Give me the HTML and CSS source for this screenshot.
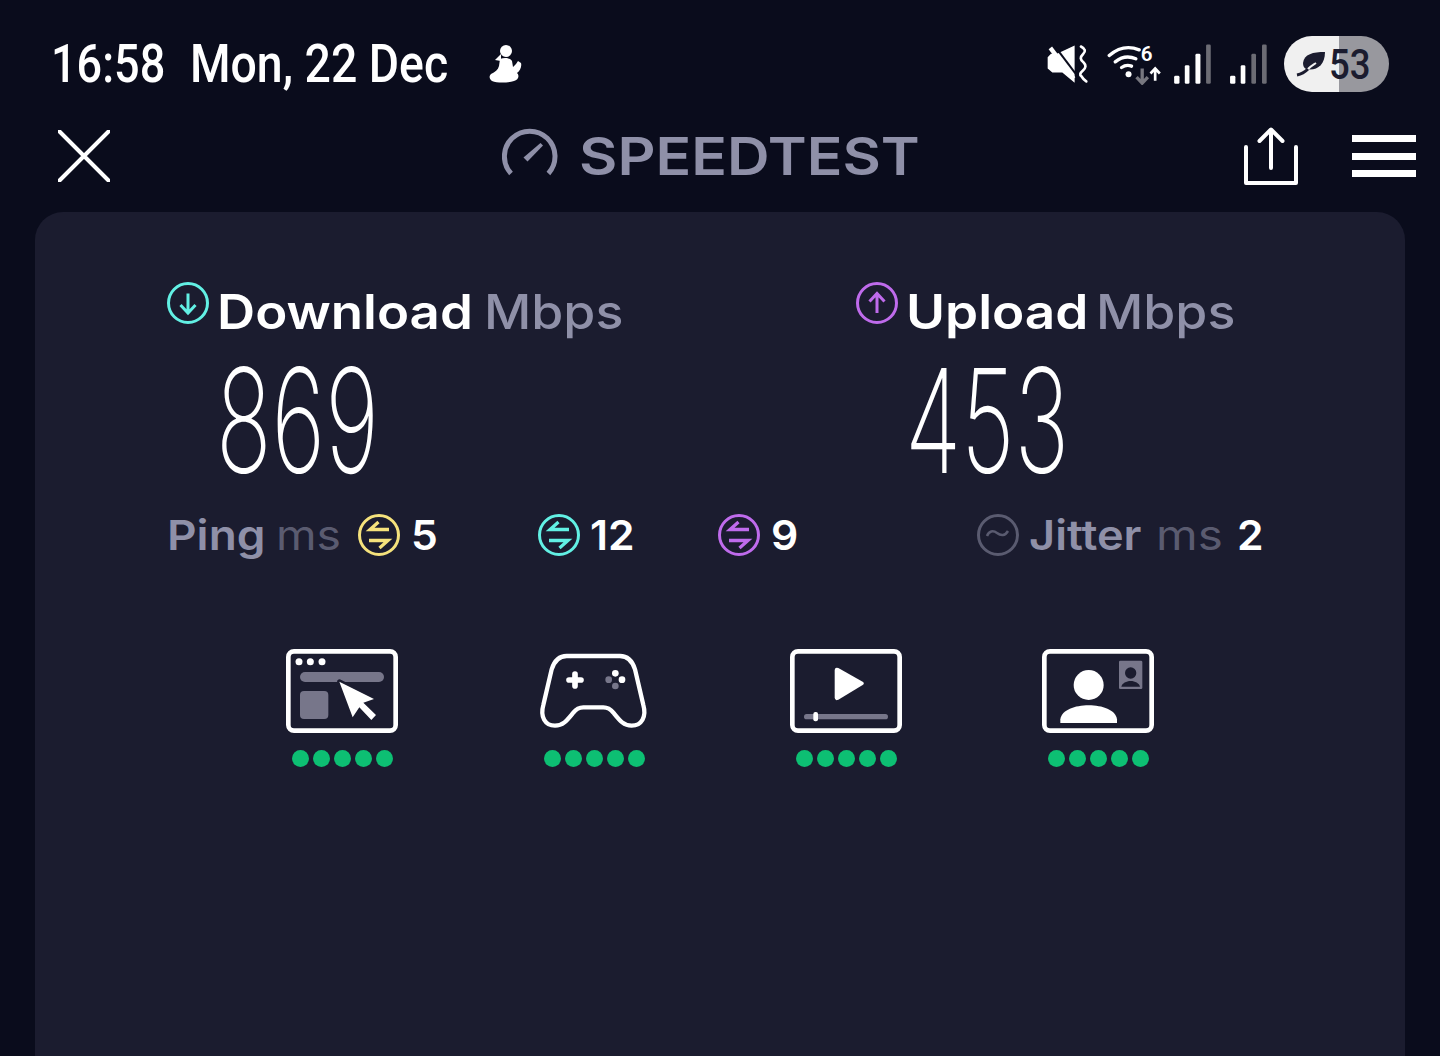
FILE: index.html
```html
<!DOCTYPE html>
<html lang="en">
<head>
<meta charset="utf-8">
<title>Speedtest</title>
<link rel="stylesheet" href="styles.css">
</head>
<body>
<div class="screen">
  <div class="status">
    <span class="time">16:58</span>
    <span class="date">Mon, 22 Dec</span>
    <svg class="figure" viewBox="0 0 36 40"><circle cx="19" cy="6" r="6" fill="#fff"/><path d="M14 9 8 15l6 1Z" fill="#fff"/><path d="M13 14c5-2 10-1 12 2l1 6 3-3 2-3 3 2c1 4-1 8-4 10 3 3 1 7-3 8-7 2-17 2-22 0-3-2-3-5-1-7 4-2 7-4 8-8Z" fill="#fff"/></svg>
    <svg class="sys" viewBox="50 70 670 125">
      <path d="M52 112 62 102H80L133 77V189L96 158H66L52 146Z" fill="#fff"/>
      <path d="M60 84 130 176" stroke="#fff" stroke-width="13" fill="none"/>
      <path d="M71 76 141 168" stroke="#0a0c1c" stroke-width="6" fill="none"/>
      <path d="M152 80Q172 90 158 103T160 128Q172 140 158 152T154 170Q160 180 168 185" stroke="#fff" stroke-width="8" stroke-linecap="round" fill="none"/>
      <g fill="none" stroke="#fff" stroke-width="10" stroke-linecap="round"><path d="M237 107c30-26 60-29 90-17"/><path d="M255 126c20-16 42-18 62-9"/><path d="M274 143c10-7 20-8 30-4"/></g>
      <circle cx="295" cy="163" r="9" fill="#fff"/>
      <text class="wifi6" x="332" y="124">6</text>
      <path d="M336 146v42m-17-16 17 18 17-18" stroke="#77777f" stroke-width="10" fill="none"/>
      <path d="M375 183v-36m-14 14 14-15 14 15" stroke="#fff" stroke-width="8" fill="none"/>
      <g fill="#fff"><rect x="432" y="168" width="16" height="24" rx="4"/><rect x="464" y="136" width="14" height="56" rx="4"/><rect x="496" y="102" width="15" height="90" rx="4"/><rect x="600" y="168" width="16" height="24" rx="4"/><rect x="632" y="136" width="14" height="56" rx="4"/></g>
      <g fill="#6c6c74"><rect x="528" y="74" width="14" height="118" rx="4"/><rect x="664" y="102" width="14" height="90" rx="4"/><rect x="696" y="74" width="14" height="118" rx="4"/></g>
    </svg>
    <div class="battery">
      <svg class="leaf" viewBox="0 0 30 26"><path d="M29 1C17 1 8 3 7 12c0 3 1 5 3 6 10 2 19-3 19-17Z" fill="#1b1c2f"/><path d="M1 24c5-1 8-3 11-6 3-3 5-4 8-6" fill="none" stroke="#f0f0f0" stroke-width="2"/><path d="M1 24c5-1 8-3 11-6" fill="none" stroke="#1b1c2f" stroke-width="3"/></svg>
      <span class="level">53</span>
    </div>
  </div>

  <header class="topbar">
    <svg class="close" viewBox="0 0 52 52"><path d="M1.500 1.500l49 49M50.500 1.500l-49 49" stroke="#fff" stroke-width="4" stroke-linecap="round"/></svg>
    <div class="brand">
      <svg class="gauge" viewBox="0 0 56 50"><path d="M9 45.500A25.300 25.300 0 1 1 46.400 45.500" fill="none" stroke="#8f90a8" stroke-width="5"/><path d="M21.500 29.500 38.500 15 41 17.500 25.500 33.500Z" fill="#8f90a8"/></svg>
      <span class="brand-name">SPEEDTEST</span>
    </div>
    <svg class="share" viewBox="0 0 54 58"><path d="M27 41V3M15.500 14 27 2.500 38.500 14M2 20v36h50V20" fill="none" stroke="#fff" stroke-width="4" stroke-linecap="round" stroke-linejoin="round"/></svg>
    <div class="menu"><i></i><i></i><i></i></div>
  </header>

  <main class="card">
    <section class="speeds">
      <div class="speed">
        <div class="speed-label">
          <svg class="dir" viewBox="0 0 42 42"><circle cx="21" cy="21" r="19.500" fill="none" stroke="#62f0e4" stroke-width="3"/><path d="M21 11.500v19M13.500 23l7.500 8 7.500-8" fill="none" stroke="#62f0e4" stroke-width="3"/></svg>
          <span class="label-main main-down">Download</span><span class="label-unit">Mbps</span>
        </div>
        <div class="big">869</div>
      </div>
      <div class="speed">
        <div class="speed-label">
          <svg class="dir" viewBox="0 0 42 42"><circle cx="21" cy="21" r="19.500" fill="none" stroke="#bf6bec" stroke-width="3"/><path d="M21 31V12M13.500 19.500 21 11.500l7.500 8" fill="none" stroke="#bf6bec" stroke-width="3"/></svg>
          <span class="label-main main-up">Upload</span><span class="label-unit">Mbps</span>
        </div>
        <div class="big">453</div>
      </div>
    </section>

    <section class="latency">
      <span class="lat-word ping-word">Ping</span>
      <span class="lat-unit ping-unit">ms</span>
      <svg class="lat-icon" viewBox="0 0 42 42"><circle cx="21" cy="21" r="19.500" fill="none" stroke="#f5e27c" stroke-width="3"/><path d="M31 15.500H12L20.500 8M11 26.500H30L21.500 34" fill="none" stroke="#f5e27c" stroke-width="3.300"/></svg>
      <span class="lat-val val-idle">5</span>
      <svg class="lat-icon" viewBox="0 0 42 42"><circle cx="21" cy="21" r="19.500" fill="none" stroke="#62f0e4" stroke-width="3"/><path d="M31 15.500H12L20.500 8M11 26.500H30L21.500 34" fill="none" stroke="#62f0e4" stroke-width="3.300"/></svg>
      <span class="lat-val val-down">12</span>
      <svg class="lat-icon" viewBox="0 0 42 42"><circle cx="21" cy="21" r="19.500" fill="none" stroke="#bf6bec" stroke-width="3"/><path d="M31 15.500H12L20.500 8M11 26.500H30L21.500 34" fill="none" stroke="#bf6bec" stroke-width="3.300"/></svg>
      <span class="lat-val val-up">9</span>
      <svg class="lat-icon" viewBox="0 0 42 42"><circle cx="21" cy="21" r="19.500" fill="none" stroke="#5a5b70" stroke-width="3"/><path d="M10 22c2-5 6-6 10-3s8 3 11-2" fill="none" stroke="#5a5b70" stroke-width="2.500"/></svg>
      <span class="lat-word jitter-word">Jitter</span>
      <span class="lat-unit jitter-unit">ms</span>
      <span class="lat-val val-jitter">2</span>
    </section>

    <section class="quality">
      <div class="q">
        <svg class="q-icon" viewBox="48 57 336 252">
          <rect x="55" y="64" width="322" height="238" rx="17" fill="none" stroke="#fff" stroke-width="14"/>
          <circle cx="87" cy="95" r="10.500" fill="#fff"/><circle cx="121" cy="95" r="10.500" fill="#fff"/><circle cx="156" cy="95" r="10.500" fill="#fff"/>
          <rect x="90" y="126" width="252" height="30" rx="15" fill="#77768a"/>
          <rect x="90" y="183" width="85" height="84" rx="12" fill="#77768a"/>
          <path class="cursor" d="M208 155 312 207 280 218 318 255 304 270 268 232 248 262Z"/>
        </svg>
        <div class="dots"><i></i><i></i><i></i><i></i><i></i></div>
      </div>
      <div class="q">
        <svg class="q-icon" viewBox="804 57 336 252">
          <path d="M890 78H1050C1075 78 1088 96 1095 118L1120 225C1130 260 1115 287 1085 287 1060 287 1048 270 1030 248 1020 235 1012 232 1000 232H940C928 232 920 235 910 248 892 270 880 287 855 287 825 287 810 260 820 225L845 118C852 96 865 78 890 78Z" fill="none" stroke="#fff" stroke-width="13"/>
          <path d="M915 132v36M897 150h36" stroke="#fff" stroke-width="17" stroke-linecap="round"/>
          <circle cx="1036" cy="130" r="10" fill="#fff"/><circle cx="1056" cy="149" r="10" fill="#fff"/><circle cx="1016" cy="149" r="10" fill="#77768a"/><circle cx="1036" cy="168" r="10" fill="#77768a"/>
        </svg>
        <div class="dots"><i></i><i></i><i></i><i></i><i></i></div>
      </div>
      <div class="q">
        <svg class="q-icon" viewBox="60 57 336 252">
          <rect x="67" y="64" width="322" height="238" rx="17" fill="none" stroke="#fff" stroke-width="14"/>
          <path d="M205 114 278 155Q285 160 278 165L205 209Q194 214 194 202V122Q194 110 205 114Z" fill="#fff"/>
          <rect x="102" y="252" width="252" height="16" rx="8" fill="#77768a"/>
          <rect x="130" y="246" width="14" height="28" rx="6" fill="#fff"/>
        </svg>
        <div class="dots"><i></i><i></i><i></i><i></i><i></i></div>
      </div>
      <div class="q">
        <svg class="q-icon" viewBox="816 57 336 252">
          <rect x="823" y="64" width="322" height="238" rx="17" fill="none" stroke="#fff" stroke-width="14"/>
          <circle cx="956" cy="165" r="45" fill="#fff"/>
          <path d="M871 279V268C875 240 915 226 956 226S1037 240 1041 268V279Z" fill="#fff"/>
          <rect x="1047" y="92" width="70" height="85" rx="4" fill="#77768a"/>
          <circle cx="1082" cy="129" r="17" fill="#1b1c2f"/>
          <path d="M1054 170c2-10 15-17 28-17s26 7 28 17Z" fill="#1b1c2f"/>
        </svg>
        <div class="dots"><i></i><i></i><i></i><i></i><i></i></div>
      </div>
    </section>
  </main>
</div>
</body>
</html>
```
FILE: styles.css
```css
* { box-sizing: border-box; }
html, body { margin: 0; padding: 0; height: 100%; }
body { background: #0a0c1c; overflow: hidden; font-family: Inter, "Liberation Sans", sans-serif; }
.screen { height: 1056px; display: flex; flex-direction: column; }

.status { height: 128px; padding: 36px 51px 0 51px; display: flex; align-items: flex-start; }
.time, .date { display: block; flex: none; font: 500 53px/56px Roboto, sans-serif; color: #fff; white-space: pre; transform-origin: left center; }
.time { width: 139px; transform: scaleX(.85); }
.date { width: 297px; transform: scaleX(.875); }
.figure { width: 36px; height: 40px; margin: 9px 0 0 0; flex: none; }
.sys { width: 223px; height: 42px; margin: 7px 0 0 auto; flex: none; }
.wifi6 { font: 600 62px Roboto, sans-serif; fill: #fff; }
.battery { width: 105px; height: 56px; margin-left: 14px; border-radius: 28px; background: linear-gradient(90deg, #f0f0f0 0 55px, #98989e 55px); display: flex; align-items: center; padding-left: 12px; flex: none; }
.leaf { width: 30px; height: 26px; flex: none; }
.level { font: 500 43px/56px Roboto, sans-serif; color: #1b1c2f; margin-left: 3px; transform: scaleX(.85); transform-origin: left center; }

.topbar { height: 84px; padding: 0 24px 28px 58px; display: flex; align-items: center; }
.close { width: 52px; height: 52px; flex: none; }
.brand { display: flex; align-items: center; margin-left: 392px; flex: none; }
.gauge { width: 56px; height: 50px; margin-bottom: 6px; flex: none; }
.brand-name { display: block; width: 336px; margin: 2px 0 0 21px; font: 600 52px/56px Inter, sans-serif; color: #8f90a8; transform: scaleX(1.135); transform-origin: left center; }
.share { width: 54px; height: 58px; margin-left: auto; flex: none; }
.menu { width: 64px; margin-left: 54px; display: flex; flex-direction: column; gap: 10.500px; flex: none; }
.menu i { display: block; height: 7px; background: #fff; }

.card { flex: 1; margin: 0 35px; background: #1b1c2f; border-radius: 28px 28px 0 0; padding: 70px 0 0 132px; }
.speeds { display: grid; grid-template-columns: 689px 1fr; }
.speed-label { display: flex; align-items: flex-start; height: 60px; }
.dir { width: 42px; height: 42px; flex: none; }
.label-main { display: block; margin-left: 8px; font: 600 48px/60px Inter, sans-serif; color: #fff; transform-origin: left center; }
.main-down { width: 267px; transform: scaleX(1.1); }
.main-up { width: 190px; transform: scaleX(1.105); }
.label-unit { display: block; font: 500 48px/60px Inter, sans-serif; color: #8f90a8; transform: scaleX(1.08); transform-origin: left center; }
.big { margin: 14px 0 0 49px; height: 130px; font: 250 145px/130px Inter, sans-serif; color: #fff; transform: scaleX(.635); transform-origin: left center; }

.latency { margin-top: 19px; height: 60px; display: flex; align-items: center; }
.lat-word, .lat-unit, .lat-val { display: block; flex: none; transform-origin: left center; font-size: 41px; line-height: 60px; }
.lat-word { font-weight: 600; color: #8f90a8; }
.lat-unit { font-weight: 400; color: #5a5b70; }
.lat-val { font-weight: 600; color: #fff; transform: scaleX(1.04); }
.lat-icon { width: 42px; height: 42px; flex: none; }
.ping-word { width: 109px; transform: scaleX(1.12); }
.ping-unit { width: 82px; transform: scaleX(1.13); }
.val-idle { width: 127px; margin-left: 11px; }
.val-down { width: 128px; margin-left: 10px; }
.val-up { width: 206px; margin-left: 11px; }
.jitter-word { width: 127px; margin-left: 10px; transform: scaleX(1.1); }
.jitter-unit { width: 81px; transform: scaleX(1.16); }

.quality { margin-top: 84px; margin-left: 119px; display: grid; grid-template-columns: repeat(4, 252px); }
.q { display: flex; flex-direction: column; align-items: center; width: 112px; }
.q-icon { width: 112px; height: 84px; display: block; }
.cursor { fill: #fff; stroke: #1b1c2f; stroke-width: 14; stroke-linejoin: round; paint-order: stroke; }
.dots { display: flex; gap: 4px; margin-top: 17px; }
.dots i { display: block; width: 17px; height: 17px; border-radius: 50%; background: #0dbf73; }
```
